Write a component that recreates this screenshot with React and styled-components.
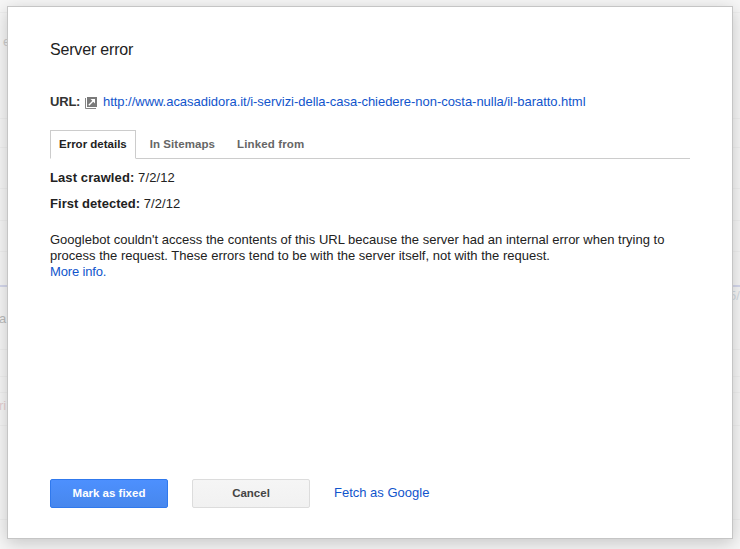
import React, { useState } from 'react';
import styled, { createGlobalStyle } from 'styled-components';

const URL = 'http://www.acasadidora.it/i-servizi-della-casa-chiedere-non-costa-nulla/il-baratto.html';

const TABS = [
  { id: 'details', label: 'Error details', spacing: '0px' },
  { id: 'sitemaps', label: 'In Sitemaps', spacing: '0.06px' },
  { id: 'linked', label: 'Linked from', spacing: '0.14px' },
];

// vertical positions of the table rules on the page behind the dialog
const RULES = [12, 118, 147, 188, 220, 251, 349, 376, 392, 425, 519];

const OpenIcon = () => (
  <Icon viewBox="0 0 12 12" width="12" height="12">
    <path d="M2 0H12V10H2Z" fill="#7a7a7a" />
    <path d="M0.5 1V11.5H11" fill="none" stroke="#858585" />
    <path d="M3.8 8.2L9 3" fill="none" stroke="#fff" strokeWidth="1.3" />
    <path d="M5.5 2H10V6.5Z" fill="#fff" />
  </Icon>
);

const Backdrop = () => (
  <BackdropLayer aria-hidden="true">
    {RULES.map(top => <Rule key={top} $top={top} />)}
    <ChartLine />
    <Remnant $left={3} $top={34}>e</Remnant>
    <Remnant $left={-1} $top={311} $color="#bbb">a</Remnant>
    <Remnant $left={-1} $top={398} $color="#e6d0d0">ri</Remnant>
    <Remnant $left={729} $top={288} $color="#d3dae2">5/</Remnant>
  </BackdropLayer>
);

const App = () => {
  const [activeTab, setActiveTab] = useState('details');

  return (
    <Page>
      <GlobalStyle />
      <Backdrop />
      <Dialog role="dialog" aria-label="Server error">
        <Title>Server error</Title>
        <UrlRow>
          <UrlLabel>URL:</UrlLabel>
          <OpenIcon />
          <Link href={URL} $spacing="-0.035px">{URL}</Link>
        </UrlRow>
        <TabBar>
          {TABS.map(({ id, label, spacing }) => (
            <Tab
              key={id}
              $active={id === activeTab}
              $spacing={spacing}
              onClick={() => setActiveTab(id)}
            >
              {label}
            </Tab>
          ))}
        </TabBar>
        <Details>
          <Field $spacing="0.1px"><b>Last crawled:</b> 7/2/12</Field>
          <Field $spacing="0.04px"><b>First detected:</b> 7/2/12</Field>
        </Details>
        <Message>
          <Line>Googlebot couldn't access the contents of this URL because the server had an internal error when trying to</Line>
          <Line>process the request. These errors tend to be with the server itself, not with the request.</Line>
          <Link href="#more" $spacing="-0.15px">More info.</Link>
        </Message>
        <Actions>
          <Button $primary>Mark as fixed</Button>
          <Button>Cancel</Button>
          <FetchLink href="#fetch">Fetch as Google</FetchLink>
        </Actions>
      </Dialog>
    </Page>
  );
};

const GlobalStyle = createGlobalStyle`
  body {
    margin: 0;
    overflow: hidden;
    font-family: "Liberation Sans", Arial, sans-serif;
    font-size: 13px;
    color: #222;
  }
`;

const Page = styled.div`
  position: relative;
  box-sizing: border-box;
  height: 549px;
  padding: 6px 7px 10px;
  background: #f6f6f6;
  overflow: hidden;
`;

const BackdropLayer = styled.div`
  position: absolute;
  inset: 0;
`;

const Rule = styled.div`
  position: absolute;
  top: ${({ $top }) => $top}px;
  width: 100%;
  height: 1px;
  background: #efefef;
`;

const ChartLine = styled.div`
  position: absolute;
  top: 285px;
  width: 100%;
  height: 2px;
  background: #d5d8ec;
`;

const Remnant = styled.span`
  position: absolute;
  left: ${({ $left }) => $left}px;
  top: ${({ $top }) => $top}px;
  color: ${({ $color }) => $color || '#ccc'};
  white-space: nowrap;
`;

const Dialog = styled.div`
  position: relative;
  box-sizing: border-box;
  display: flex;
  flex-direction: column;
  height: 533px;
  padding: 33px 42px 30px;
  border: 1px solid #c5c5c5;
  background: #fff;
  box-shadow: 0 4px 16px rgba(0, 0, 0, 0.2);
`;

const Title = styled.h1`
  margin: 0;
  font-size: 16px;
  font-weight: normal;
  letter-spacing: -0.18px;
  line-height: 20px;
`;

const UrlRow = styled.div`
  display: flex;
  align-items: center;
  height: 16px;
  margin-top: 33px;
`;

const UrlLabel = styled.strong`
  width: 30px;
  letter-spacing: -0.2px;
  color: #333;
`;

const Icon = styled.svg`
  flex: none;
  margin: 3px 6px 0 5px;
`;

const Link = styled.a`
  color: #15c;
  letter-spacing: ${({ $spacing }) => $spacing || 'normal'};
  text-decoration: none;
`;

const TabBar = styled.div`
  display: flex;
  box-sizing: border-box;
  height: 29px;
  margin-top: 21px;
  border-bottom: 1px solid #ccc;
`;

const Tab = styled.button`
  box-sizing: border-box;
  height: 29px;
  padding: 0 ${({ $active }) => ($active ? 8 : 7)}px 2px;
  margin-right: 6px;
  border: 1px solid ${({ $active }) => ($active ? '#ccc' : 'transparent')};
  border-bottom-color: ${({ $active }) => ($active ? '#fff' : 'transparent')};
  background: ${({ $active }) => ($active ? '#fff' : 'transparent')};
  color: ${({ $active }) => ($active ? '#222' : '#666')};
  font: bold 11.5px "Liberation Sans", Arial, sans-serif;
  letter-spacing: ${({ $spacing }) => $spacing};
  white-space: nowrap;
`;

const Details = styled.div`
  display: flex;
  flex-direction: column;
  gap: 10px;
  margin-top: 11px;
`;

const Field = styled.div`
  letter-spacing: ${({ $spacing }) => $spacing};
  line-height: 16px;
`;

const Message = styled.div`
  margin-top: 20px;
  line-height: 16px;
`;

const Line = styled.div`
  letter-spacing: 0.01px;
  white-space: nowrap;
`;

const Actions = styled.div`
  display: flex;
  align-items: center;
  gap: 24px;
  margin-top: auto;
`;

const FetchLink = styled(Link)`
  padding-bottom: 2px;
`;

const Button = styled.button`
  box-sizing: border-box;
  width: 118px;
  height: 29px;
  padding: 0 0 2px;
  border: 1px solid ${({ $primary }) => ($primary ? '#3079ed' : '#dcdcdc')};
  border-radius: 2px;
  background: ${({ $primary }) => ($primary
    ? 'linear-gradient(#4d90fe, #4787ed)'
    : 'linear-gradient(#f5f5f5, #f1f1f1)')};
  color: ${({ $primary }) => ($primary ? '#fff' : '#444')};
  font: bold 11.5px "Liberation Sans", Arial, sans-serif;
`;

export default App;
